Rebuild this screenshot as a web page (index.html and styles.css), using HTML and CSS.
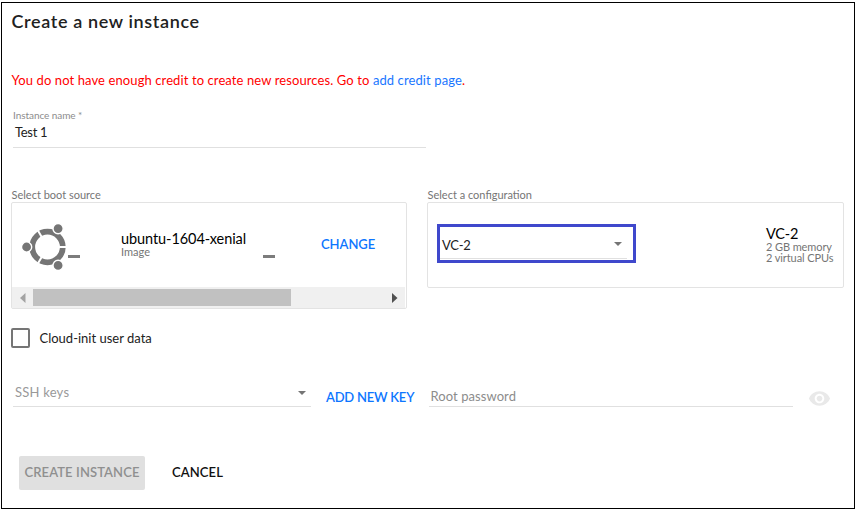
FILE: index.html
```html
<!DOCTYPE html>
<html lang="en">
<head>
<meta charset="utf-8">
<title>Create a new instance</title>
<link rel="stylesheet" href="styles.css">
</head>
<body>
<main class="page">
  <h1 class="title">Create a new instance</h1>
  <p class="warning">You do not have enough credit to create new resources. Go to <a class="link" href="#">add credit page</a>.</p>

  <div class="field name-field">
    <label class="float-label">Instance name *</label>
    <div class="name-value">Test 1</div>
  </div>

  <div class="panels">
    <section class="boot">
      <h2 class="panel-label">Select boot source</h2>
      <div class="card">
        <div class="boot-body">
          <svg class="ubuntu" width="48" height="48" viewBox="0 0 48 48">
            <circle cx="26.5" cy="24" r="15.3" fill="none" stroke="#757575" stroke-width="5.8"/>
            <path d="M26.5 24H47M26.5 24L16.2 6.2M26.5 24L16.2 41.8" stroke="#fff" stroke-width="2"/>
            <g fill="#757575" stroke="#fff" stroke-width="1.4">
              <circle cx="5.6" cy="24" r="5.100"/>
              <circle cx="37.1" cy="5.600" r="5.100"/>
              <circle cx="37.1" cy="42.400" r="5.100"/>
            </g>
          </svg>
          <span class="dash"></span>
          <div class="boot-text">
            <div class="item-name image-name">ubuntu-1604-xenial</div>
            <div class="item-sub">Image</div>
          </div>
          <span class="dash"></span>
          <button class="text-btn change">CHANGE</button>
        </div>
        <div class="scrollbar">
          <svg class="arrow" width="6" height="10" viewBox="0 0 6 10"><path d="M5.5 0V10L0 5Z" fill="#a3a3a3"/></svg>
          <span class="thumb"></span>
          <svg class="arrow arrow-right" width="6" height="10" viewBox="0 0 6 10"><path d="M0 0V10L5.5 5Z" fill="#505050"/></svg>
        </div>
      </div>
    </section>
    <section class="config">
      <h2 class="panel-label">Select a configuration</h2>
      <div class="card config-card">
        <div class="highlight">
          <div class="select config-select">
            <span class="select-value">VC-2</span>
            <svg width="8" height="4" viewBox="0 0 8 4"><path d="M0 0H8L4 4Z" fill="#757575"/></svg>
          </div>
        </div>
        <div class="specs">
          <div class="item-name">VC-2</div>
          <div class="item-sub spec">2 GB memory</div>
          <div class="item-sub spec">2 virtual CPUs</div>
        </div>
      </div>
    </section>
  </div>

  <label class="check"><span class="box"></span><span class="check-text">Cloud-init user data</span></label>

  <div class="keys">
    <div class="select ssh"><span class="ssh-text">SSH keys</span>
      <svg width="8" height="4" viewBox="0 0 8 4"><path d="M0 0H8L4 4Z" fill="#757575"/></svg>
    </div>
    <button class="text-btn add-key">ADD NEW KEY</button>
    <div class="password">Root password</div>
    <svg class="eye" width="23" height="23" viewBox="0 0 24 24"><path fill="#e9e9e9" d="M12 4.500C7 4.500 2.730 7.610 1 12c1.730 4.390 6 7.500 11 7.500s9.270-3.110 11-7.500c-1.730-4.390-6-7.500-11-7.500zM12 17c-2.760 0-5-2.240-5-5s2.240-5 5-5 5 2.240 5 5-2.240 5-5 5zm0-8c-1.660 0-3 1.340-3 3s1.340 3 3 3 3-1.340 3-3-1.340-3-3-3z"/></svg>
  </div>

  <div class="actions">
    <button class="text-btn create" disabled>CREATE INSTANCE</button>
    <button class="text-btn cancel">CANCEL</button>
  </div>
</main>
</body>
</html>
```
FILE: styles.css
```css
* { box-sizing: border-box; }

body {
  margin: 0;
  padding: 2px 1px 1px;
  background: #fff;
  color: #212121;
  font: 13px/16px Lato, "Liberation Sans", sans-serif;
}

.page {
  width: 854px;
  height: 507px;
  padding: 7px 10px 0;
  border: 1px solid #000;
}

.title {
  margin: 0 0 0 -.5px;
  font-size: 18px;
  line-height: 22px;
  font-weight: 600;
  letter-spacing: .63px;
}

.warning {
  margin: 40px 0 0 -.5px;
  color: #f00;
  letter-spacing: .1px;
  white-space: nowrap;
}

.link { color: #1976ff; text-decoration: none; }

.field {
  width: 413px;
  height: 39px;
  margin: 21px 0 0 1px;
  border-bottom: 1px solid #e0e0e0;
}

.float-label {
  display: block;
  color: #8c8c8c;
  font-size: 10px;
  line-height: 12px;
  letter-spacing: -.06px;
}

.name-value {
  margin: 3px 0 0 2px;
  letter-spacing: -.3px;
}

.panels {
  display: flex;
  align-items: flex-start;
  gap: 20px;
  margin: 40px 0 0 -1px;
}

.boot { width: 396px; }
.config { width: 417px; }

.panel-label {
  margin: 0 0 0 .5px;
  color: #757575;
  font-size: 11px;
  line-height: 14px;
  font-weight: 400;
}

.card {
  border: 1px solid #e3e3e3;
  border-radius: 2px;
}

.boot-body {
  display: flex;
  align-items: flex-start;
  height: 84px;
}

.ubuntu { margin: 20px 0 0 9px; }

.dash {
  flex: none;
  width: 12px;
  height: 3px;
  margin: 52px 0 0 -1px;
  background: #7c7c7c;
}

.boot-text {
  width: 143px;
  margin: 28px 0 0 41px;
}

.item-name {
  color: #000;
  font-size: 14.500px;
  line-height: 16px;
  letter-spacing: -.2px;
}

.image-name { letter-spacing: -.08px; }

.item-sub {
  margin-top: -1px;
  color: #757575;
  font-size: 11px;
  line-height: 11px;
}

.text-btn {
  padding: 0;
  border: 0;
  background: none;
  font: 600 13px/16px Lato, "Liberation Sans", sans-serif;
  white-space: nowrap;
}

.change { margin: 33px 0 0 46px; color: #0d76ff; letter-spacing: -.05px; }

.scrollbar {
  display: flex;
  align-items: center;
  width: 393px;
  height: 21px;
  padding: 0 7px 0 8px;
  background: #f0f0f0;
}

.thumb {
  width: 258px;
  height: 17px;
  margin-left: 7px;
  background: #c1c1c1;
}

.arrow-right { margin-left: auto; }

.config-card {
  display: flex;
  align-items: flex-start;
  justify-content: space-between;
  height: 86px;
  padding: 21px 0 0 9px;
}

.highlight {
  width: 199px;
  height: 39px;
  border: 3px solid #3f48cc;
}

.select {
  display: flex;
  justify-content: space-between;
  border-bottom: 1px solid #e0e0e0;
}

.config-select {
  align-items: center;
  width: 187px;
  height: 32px;
  padding: 3px 5px 0 2px;
}

.config-select svg { margin-top: -1px; }

.select-value { letter-spacing: -.3px; padding-top: 2px; }

.specs { width: 77px; margin-top: 2px; }

.spec { letter-spacing: -.1px; }

.spec + .spec { margin-top: 0; }

.check {
  display: flex;
  align-items: center;
  gap: 10px;
  margin: 19px 0 0 -1px;
}

.check-text { margin: -1px 0 0 -.5px; }

.box {
  width: 19px;
  height: 20px;
  border: 2px solid #757575;
  border-radius: 2px;
}

.keys {
  display: flex;
  align-items: flex-start;
  height: 27px;
  margin: 32px 0 0 1px;
}

.ssh {
  width: 298px;
  height: 27px;
  padding: 4px 5px 0 2px;
  color: #999;
  letter-spacing: .22px;
}

.ssh svg { margin-top: 7px; }

.add-key {
  width: 88px;
  margin: 9px 0 0 15px;
  color: #0d76ff;
  letter-spacing: -.22px;
}

.password {
  width: 364px;
  height: 27px;
  margin-left: 15px;
  padding: 8px 1.500px 0;
  border-bottom: 1px solid #e0e0e0;
  color: #8c8c8c;
  letter-spacing: .07px;
}

.eye { flex: none; margin: 7px 0 0 15px; }

.actions {
  display: flex;
  align-items: center;
  gap: 27px;
  margin: 49px 0 0 7px;
}

.create {
  width: 126px;
  height: 34px;
  padding-bottom: 3px;
  border-radius: 2px;
  background: #e0e0e0;
  color: #8f8f8f;
  letter-spacing: .1px;
}

.cancel { padding-bottom: 3px; color: #111; letter-spacing: .1px; }
```
